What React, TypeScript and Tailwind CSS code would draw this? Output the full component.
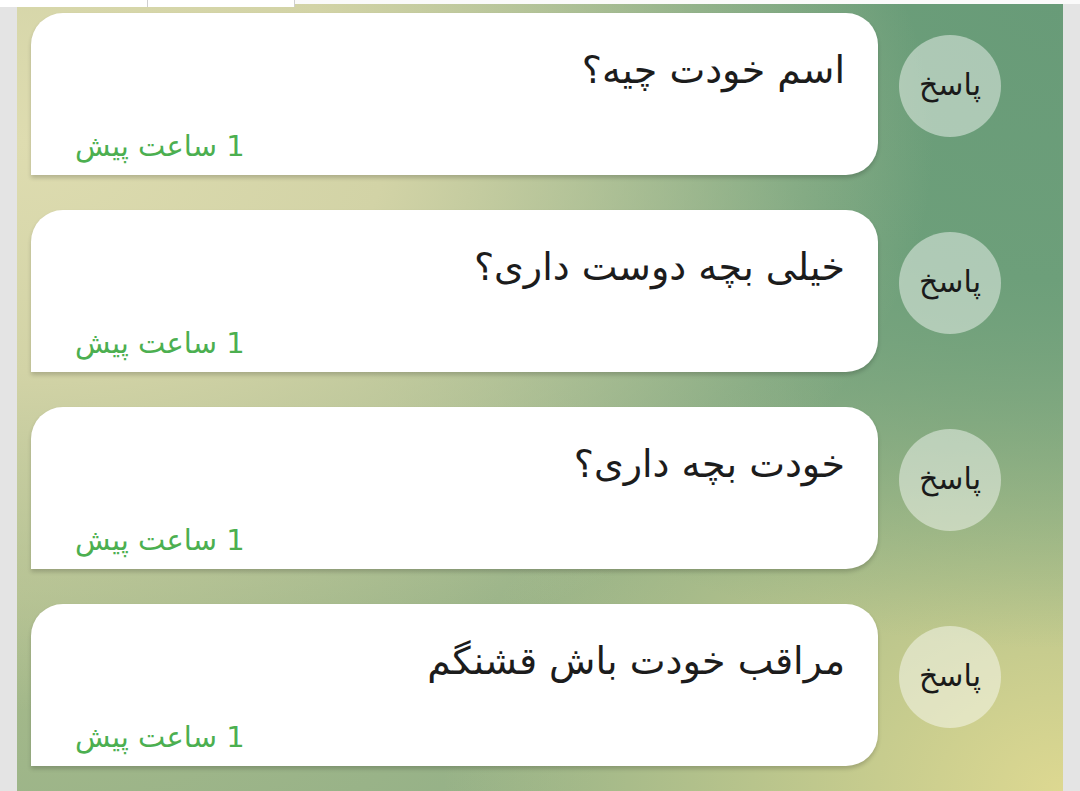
import React from "react";

const messages = ["اسم خودت چیه؟", "خیلی بچه دوست داری؟", "خودت بچه داری؟", "مراقب خودت باش قشنگم"];

const font = { fontFamily: '"DejaVu Sans", "Noto Sans", sans-serif' };

function MessageRow({ text }: { text: string }) {
  return (
    <div className="flex items-start gap-[21px] pl-[14px] pr-[62px]">
      <div className="mt-[22px] grid h-[102px] w-[102px] shrink-0 place-items-center rounded-full bg-white/45 pb-[4px] text-[30px] text-[#1a1a1a]">
        پاسخ
      </div>
      <div className="flex h-[162px] flex-1 flex-col rounded-t-[32px] rounded-br-[32px] bg-white pr-[33px] pl-[44px] shadow-[0_3px_4px_rgba(0,0,0,0.18)]">
        <div className="pt-[32px] text-[38px] leading-[50px] text-[#1c1c1c]">{text}</div>
        <div className="mt-auto pb-[9px] text-left text-[29px] leading-[40px] text-[#4caf50]">
          1 ساعت پیش
        </div>
      </div>
    </div>
  );
}

export default function App() {
  return (
    <div dir="rtl" style={font} className="relative flex h-[791px] w-[1080px] overflow-hidden bg-[#e2e2e2]">
      <div className="absolute top-0 left-0 z-10 flex h-[8px] w-full" dir="ltr">
        <div className="h-[7px] w-[147px] bg-white" />
        <div className="h-[7px] w-[1px] bg-[#cfcfcf]" />
        <div className="h-[7px] w-[147px] border-r border-[#cfcfcf] bg-white" />
        <div className="h-[4px] flex-1 bg-[#fafafa]" />
      </div>
      <div className="w-[17px] shrink-0 bg-[#e4e4e4]" />
      <div className="flex flex-1 flex-col gap-[35px] bg-[#93b087] bg-[radial-gradient(ellipse_at_0%_18%,#dedcb0_0%,#d2d3a6_25%,transparent_62%),radial-gradient(ellipse_at_100%_0%,#689b78_0%,#6d9f7a_25%,transparent_58%),radial-gradient(ellipse_at_100%_100%,#ddd891_0%,transparent_42%),radial-gradient(ellipse_at_0%_75%,#a9bb8b_0%,transparent_45%)] pt-[13px]">
        {messages.map((m) => (
          <MessageRow key={m} text={m} />
        ))}
      </div>
      <div className="w-[17px] shrink-0 bg-[#e4e4e4]" />
    </div>
  );
}
